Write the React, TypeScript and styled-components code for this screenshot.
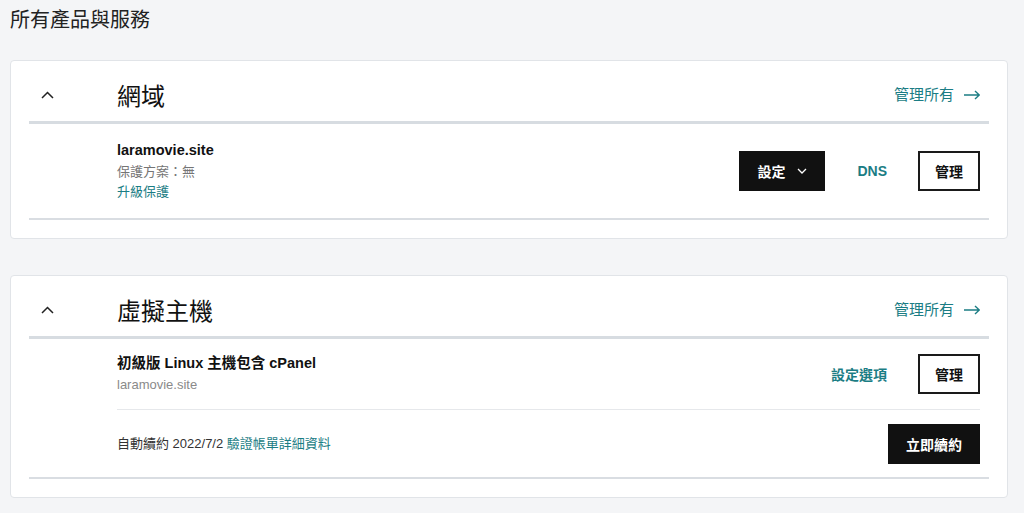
import React from "react";
import styled, { createGlobalStyle } from "styled-components";

const GlobalStyle = createGlobalStyle`
  html, body {
    margin: 0;
    padding: 0;
    background: #f4f5f7;
  }
  body {
    font-family: "Liberation Sans", "Noto Sans CJK TC", Arial, sans-serif;
    color: #111;
  }
  * { box-sizing: border-box; }
`;

const TEAL = "#1b7d84";

const Page = styled.div`
  padding: 6px 16px 16px 10px;
`;

const PageTitle = styled.h1`
  margin: 0 0 26px 0;
  font-size: 20px;
  line-height: 28px;
  font-weight: 400;
  color: #222;
`;

const Card = styled.section`
  background: #fff;
  border: 1px solid #e1e4e8;
  border-radius: 4px;
  padding: 0 18px 18px 18px;
  & + & {
    margin-top: 36px;
  }
`;

const Header = styled.div`
  display: flex;
  align-items: center;
  padding: 20px 9px 8px 0;
  height: 63px;
  border-bottom: 3px solid #d7dce1;
`;

const ToggleCol = styled.div`
  width: 88px;
  flex: none;
  display: flex;
  align-items: center;
  padding-left: 12px;
  padding-bottom: 5px;
`;

const SectionTitle = styled.h2`
  margin: 0;
  flex: 1;
  font-size: 24px;
  line-height: 32px;
  font-weight: 400;
  color: #111;
`;

const ManageAll = styled.a`
  display: flex;
  align-items: center;
  gap: 10px;
  font-size: 15px;
  line-height: 20px;
  color: ${TEAL};
  text-decoration: none;
  padding-bottom: 4px;
`;

const Body = styled.div`
  padding: 0 9px 0 88px;
  border-bottom: 2px solid #d9dde2;
`;

const Row = styled.div<{ $divided?: boolean; $pad?: number }>`
  display: flex;
  align-items: center;
  justify-content: space-between;
  padding: ${(p) => p.$pad ?? 14}px 0;
  border-bottom: ${(p) => (p.$divided ? "1px solid #e6e8eb" : "none")};
`;

const Info = styled.div`
  display: flex;
  flex-direction: column;
`;

const ItemName = styled.div`
  font-size: 14.5px;
  line-height: 20px;
  font-weight: 700;
  color: #111;
`;

const SubText = styled.div<{ $tone?: "grey" | "light" | "dark" }>`
  font-size: 13px;
  line-height: 20px;
  color: ${(p) => (p.$tone === "light" ? "#8a8a8a" : p.$tone === "dark" ? "#333" : "#757575")};
  margin-top: ${(p) => (p.$tone === "dark" ? 0 : 2)}px;
`;

const TextLink = styled.a`
  font-size: 13px;
  line-height: 20px;
  color: ${TEAL};
  text-decoration: none;
`;

const Actions = styled.div`
  display: flex;
  align-items: center;
`;

const DarkButton = styled.button`
  height: 40px;
  display: flex;
  align-items: center;
  gap: 12px;
  padding: 0 18px;
  background: #111;
  color: #fff;
  border: none;
  border-radius: 0;
  font-family: inherit;
  font-size: 14px;
  font-weight: 700;
  cursor: pointer;
`;

const OutlineButton = styled.button`
  height: 40px;
  padding: 0 15px;
  background: #fff;
  color: #111;
  border: 2px solid #1a1a1a;
  border-radius: 0;
  font-family: inherit;
  font-size: 14px;
  font-weight: 700;
  cursor: pointer;
`;

const LinkButton = styled.button`
  height: 40px;
  padding: 0 31px 0 32px;
  background: transparent;
  color: ${TEAL};
  border: none;
  font-family: inherit;
  font-size: 14px;
  font-weight: 700;
  cursor: pointer;
`;

const ChevronUp = () => (
  <svg width="13" height="8" viewBox="0 0 13 8" fill="none">
    <path d="M1 7 L6.5 1.5 L12 7" stroke="#222" strokeWidth="1.5" />
  </svg>
);

const ChevronDown = () => (
  <svg width="10" height="6" viewBox="0 0 10 6" fill="none">
    <path d="M1 1 L5 5 L9 1" stroke="#fff" strokeWidth="1.3" />
  </svg>
);

const Arrow = () => (
  <svg width="16" height="10" viewBox="0 0 16 10" fill="none">
    <path d="M0 5 H15 M11 1 L15.3 5 L11 9" stroke={TEAL} strokeWidth="1.4" />
  </svg>
);

const SectionHeader = ({ title }: { title: string }) => (
  <Header>
    <ToggleCol>
      <ChevronUp />
    </ToggleCol>
    <SectionTitle>{title}</SectionTitle>
    <ManageAll href="#">
      管理所有
      <Arrow />
    </ManageAll>
  </Header>
);

export default function App() {
  return (
    <>
      <GlobalStyle />
      <Page>
        <PageTitle>所有產品與服務</PageTitle>

        <Card>
          <SectionHeader title="網域" />
          <Body>
            <Row $pad={16}>
              <Info>
                <ItemName>laramovie.site</ItemName>
                <SubText>保護方案：無</SubText>
                <TextLink href="#">升級保護</TextLink>
              </Info>
              <Actions>
                <DarkButton>
                  設定
                  <ChevronDown />
                </DarkButton>
                <LinkButton>DNS</LinkButton>
                <OutlineButton>管理</OutlineButton>
              </Actions>
            </Row>
          </Body>
        </Card>

        <Card>
          <SectionHeader title="虛擬主機" />
          <Body>
            <Row $divided $pad={14}>
              <Info>
                <ItemName>初級版 Linux 主機包含 cPanel</ItemName>
                <SubText $tone="light">laramovie.site</SubText>
              </Info>
              <Actions>
                <LinkButton>設定選項</LinkButton>
                <OutlineButton>管理</OutlineButton>
              </Actions>
            </Row>
            <Row $pad={13.5}>
              <SubText $tone="dark">
                自動續約 2022/7/2 <TextLink href="#">驗證帳單詳細資料</TextLink>
              </SubText>
              <DarkButton>立即續約</DarkButton>
            </Row>
          </Body>
        </Card>
      </Page>
    </>
  );
}
